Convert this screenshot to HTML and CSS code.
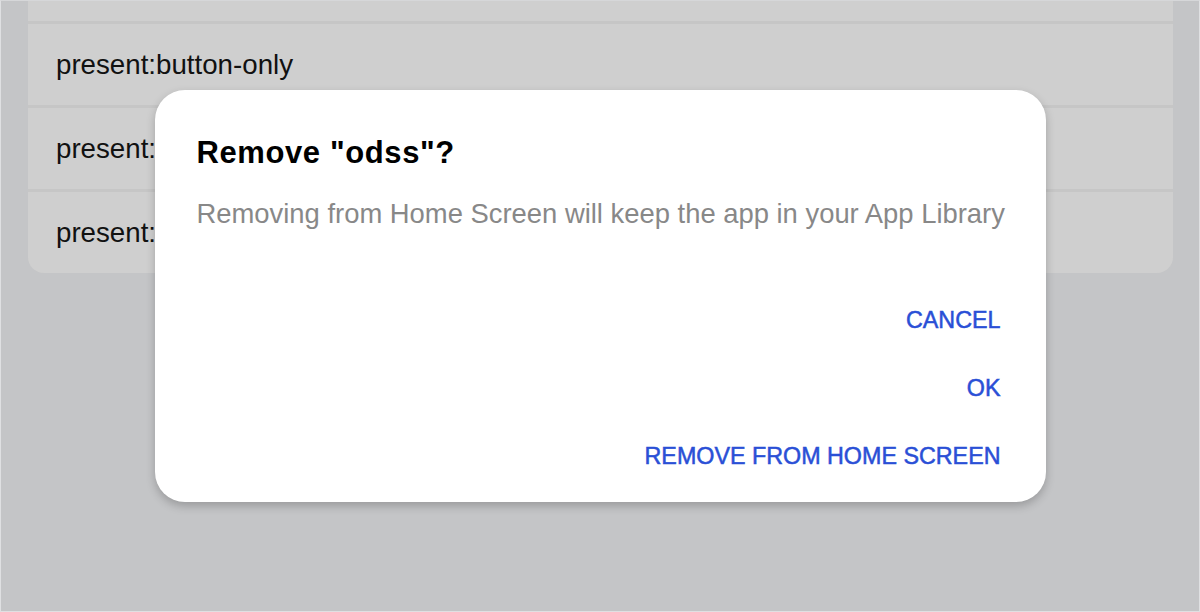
FILE: index.html
```html
<!DOCTYPE html>
<html lang="en">
<head>
<meta charset="utf-8">
<title>Remove dialog</title>
<link rel="stylesheet" href="styles.css">
</head>
<body>
<div class="screen">
  <div class="list">
    <div class="row row-cut"></div>
    <div class="row">present:button-only</div>
    <div class="row">present:action-sheet</div>
    <div class="row">present:alert-dialog</div>
  </div>
  <div class="overlay">
    <div class="dialog">
      <h1 class="title">Remove "odss"?</h1>
      <p class="message">Removing from Home Screen will keep the app in your App Library</p>
      <div class="actions">
        <button class="action">CANCEL</button>
        <button class="action">OK</button>
        <button class="action">REMOVE FROM HOME SCREEN</button>
      </div>
    </div>
  </div>
</div>
</body>
</html>
```

FILE: styles.css
```css
html, body {
  margin: 0;
  padding: 0;
  height: 100%;
}
body {
  font-family: "Liberation Sans", Arial, sans-serif;
  background: #c4c5c7;
}
.screen {
  position: relative;
  box-sizing: border-box;
  height: 612px;
  border: 1px solid #dfe0e2;
  border-top-color: #d6d7d9;
  padding-left: 27px;
  overflow: hidden;
}
.list {
  width: 1145px;
  display: flex;
  flex-direction: column;
  gap: 3px;
  background: #c6c6c6;
  border-radius: 0 0 16px 16px;
  overflow: hidden;
  margin-top: -1px;
}
.row {
  height: 81px;
  background: #cfcfcf;
  display: flex;
  align-items: center;
  padding-left: 28px;
  font-size: 27.7px;
  color: #111;
}
.row-cut {
  height: 21px;
}
.overlay {
  position: absolute;
  inset: 0;
  display: flex;
  align-items: center;
  justify-content: center;
  padding-bottom: 20px;
}
.dialog {
  box-sizing: border-box;
  width: 891px;
  height: 412px;
  background: #fff;
  border-radius: 30px;
  box-shadow: 0 4px 10px rgba(0, 0, 0, 0.22);
  padding: 45px 45px 0 42px;
  display: flex;
  flex-direction: column;
}
.title {
  margin: 0;
  font-size: 31px;
  font-weight: 700;
  letter-spacing: 0.6px;
  line-height: 36px;
  color: #000;
}
.message {
  margin: 27px 0 0;
  font-size: 27.4px;
  line-height: 32px;
  color: #888;
  white-space: nowrap;
}
.actions {
  margin-top: 76px;
  display: flex;
  flex-direction: column;
  align-items: flex-end;
  gap: 40px;
}
.action {
  border: 0;
  background: none;
  padding: 0;
  font-family: "Liberation Sans", Arial, sans-serif;
  font-size: 23.3px;
  line-height: 28px;
  color: #2a4fd6;
  -webkit-text-stroke: 0.5px #2a4fd6;
}
```
